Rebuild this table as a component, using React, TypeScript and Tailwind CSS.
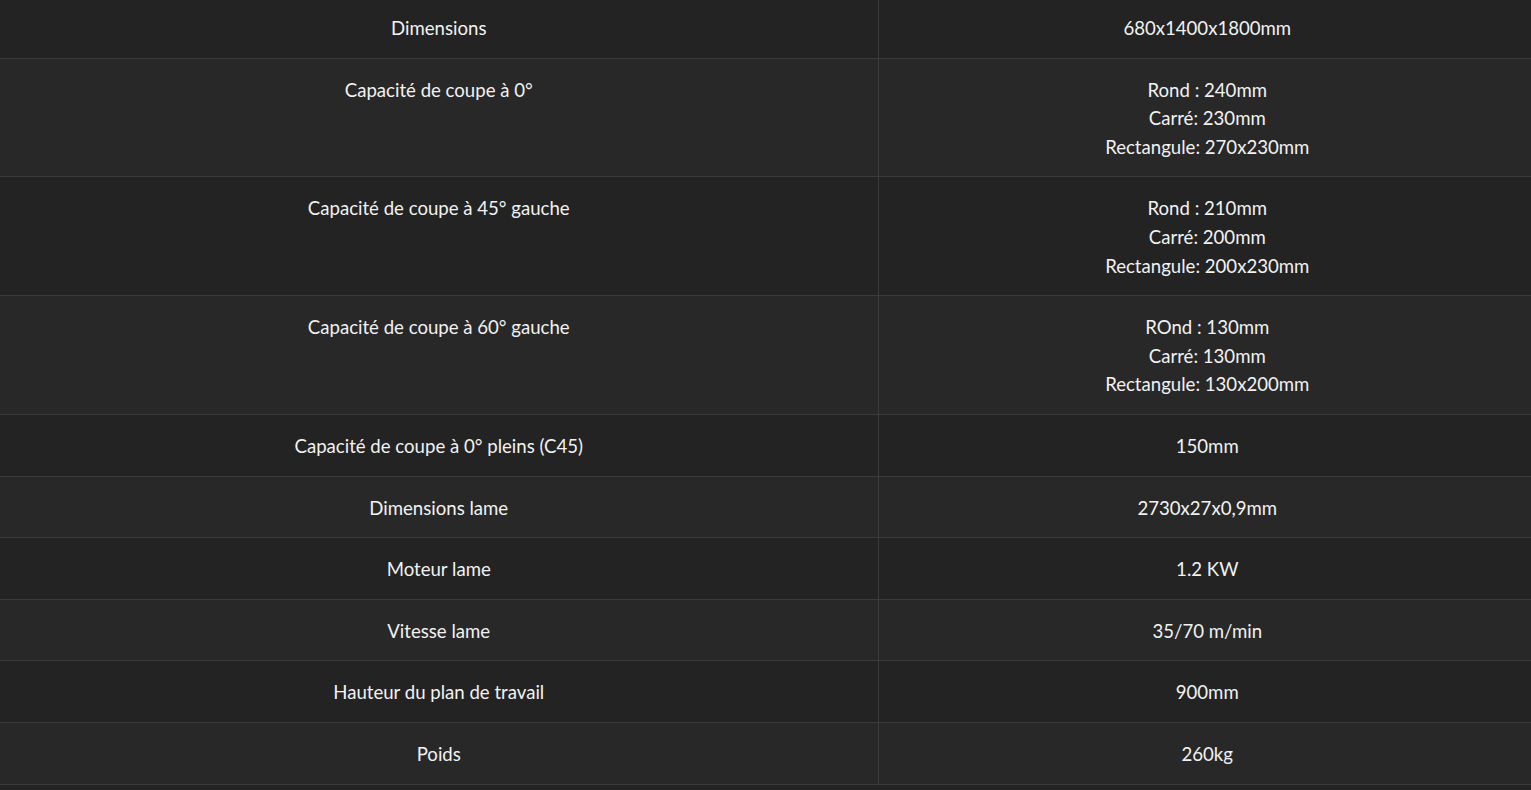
const specs: { label: string; value: string[] }[] = [
  { label: "Dimensions", value: ["680x1400x1800mm"] },
  { label: "Capacité de coupe à 0°", value: ["Rond : 240mm", "Carré: 230mm", "Rectangule: 270x230mm"] },
  { label: "Capacité de coupe à 45° gauche", value: ["Rond : 210mm", "Carré: 200mm", "Rectangule: 200x230mm"] },
  { label: "Capacité de coupe à 60° gauche", value: ["ROnd : 130mm", "Carré: 130mm", "Rectangule: 130x200mm"] },
  { label: "Capacité de coupe à 0° pleins (C45)", value: ["150mm"] },
  { label: "Dimensions lame", value: ["2730x27x0,9mm"] },
  { label: "Moteur lame", value: ["1.2 KW"] },
  { label: "Vitesse lame", value: ["35/70 m/min"] },
  { label: "Hauteur du plan de travail", value: ["900mm"] },
  { label: "Poids", value: ["260kg"] },
];

export default function App() {
  return (
    <div className="w-full h-[790px] overflow-hidden bg-[#232323] font-['Lato',sans-serif] text-[18.6px] leading-[28.6px] text-[#f2f2f2]">
      <table className="w-[1536px] -mt-[3px] border-collapse table-fixed">
        <tbody>
          {specs.map((row, i) => (
            <tr
              key={row.label}
              className={`border-b border-[#3b3b3b] ${i % 2 === 0 ? "bg-[#232323]" : "bg-[#282828]"}`}
            >
              <td className="w-[878px] border-r border-[#3b3b3b] pt-[17px] pb-[15px] px-3 text-center align-top">
                {row.label}
              </td>
              <td className="pt-[17px] pb-[15px] px-3 text-center align-top">
                {row.value.map((v) => (
                  <div key={v}>{v}</div>
                ))}
              </td>
            </tr>
          ))}
        </tbody>
      </table>
    </div>
  );
}
